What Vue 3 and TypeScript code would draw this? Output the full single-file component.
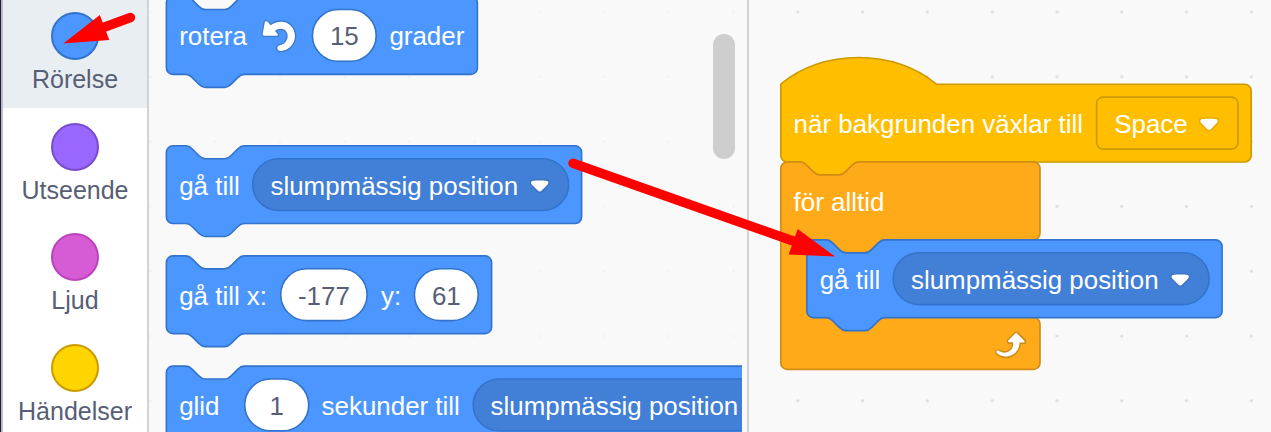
<script setup lang="ts">
interface Category { name: string; tone: string }
interface Label { text: string; x: number }
interface Oval { x: number; w: number; text: string }
interface Menu { x: number; w: number; textX: number; arrowX: number; text: string }
interface Block { x: number; y: number; w: number; labels: Label[]; inputs: Oval[]; menu?: Menu; turn?: boolean }

const U = 1.62

const categories: Category[] = [
  { name: 'Rörelse', tone: 'motion' },
  { name: 'Utseende', tone: 'looks' },
  { name: 'Ljud', tone: 'sound' },
  { name: 'Händelser', tone: 'events' },
]

const paletteBlocks: Block[] = [
  {
    x: 166.4, y: -3.4, w: 311, turn: true,
    labels: [{ text: 'rotera', x: 12.8 }, { text: 'grader', x: 223 }],
    inputs: [{ x: 146, w: 63.8, text: '15' }],
  },
  {
    x: 166.4, y: 145.8, w: 415.2,
    labels: [{ text: 'gå till', x: 12.8 }],
    inputs: [],
    menu: { x: 86.3, w: 315.9, textX: 104.1, arrowX: 363, text: 'slumpmässig position' },
  },
  {
    x: 166.4, y: 255.9, w: 325.2,
    labels: [{ text: 'gå till x:', x: 12.8 }, { text: 'y:', x: 214.6 }],
    inputs: [{ x: 114.3, w: 86.4, text: '-177' }, { x: 248, w: 63.8, text: '61' }],
  },
  {
    x: 166.4, y: 366.1, w: 640,
    labels: [{ text: 'glid', x: 12.8 }, { text: 'sekunder till', x: 155.2 }],
    inputs: [{ x: 78.3, w: 64, text: '1' }],
    menu: { x: 306.8, w: 315.9, textX: 324.2, arrowX: 583, text: 'slumpmässig position' },
  },
]

const scriptBlock: Block = {
  x: 806.9, y: 239.9, w: 415.2,
  labels: [{ text: 'gå till', x: 12.8 }],
  inputs: [],
  menu: { x: 86.3, w: 315.9, textX: 104.1, arrowX: 363, text: 'slumpmässig position' },
}

const notch = 'c2,0 3,1 4,2 l4,4 c1,1 2,2 4,2 h12 c2,0 3,-1 4,-2 l4,-4 c1,-1 2,-2 4,-2'
const notchBack = 'c-2,0 -3,1 -4,2 l-4,4 c-1,1 -2,2 -4,2 h-12 c-2,0 -3,-1 -4,-2 l-4,-4 c-1,-1 -2,-2 -4,-2'

function stackPath(px: number): string {
  const w = px / U
  return `M0,4 A4,4 0 0 1 4,0 H12 ${notch} H${w - 4} a4,4 0 0 1 4,4 v40 a4,4 0 0 1 -4,4 H48 ${notchBack} H4 a4,4 0 0 1 -4,-4 z`
}
const hatPath = `M0,0 c25,-22 71,-22 96,0 H${470.4 / U - 4} a4,4 0 0 1 4,4 v40 a4,4 0 0 1 -4,4 H48 ${notchBack} H4 a4,4 0 0 1 -4,-4 z`
const loopPath = `M0,4 A4,4 0 0 1 4,0 H12 ${notch} H156 a4,4 0 0 1 4,4 v40 a4,4 0 0 1 -4,4 H64 ${notchBack} H20 a4,4 0 0 0 -4,4 v40 a4,4 0 0 0 4,4 H156 a4,4 0 0 1 4,4 v24 a4,4 0 0 1 -4,4 H4 a4,4 0 0 1 -4,-4 z`

const arrowEdge = 'M12.71,2.44A2.41,2.41,0,0,1,12,4.16L8.08,8.08a2.45,2.45,0,0,1-3.45,0L.72,4.16A2.42,2.42,0,0,1,0,2.44,2.48,2.48,0,0,1,.71.71C1,.47,1.43,0,6.36,0S11.75,.46,12,.71A2.44,2.44,0,0,1,12.71,2.44Z'
const arrowFace = 'M6.36,7.79a1.43,1.43,0,0,1-1-.42L1.42,3.45a1.44,1.44,0,0,1,0-2c.56-.56,9.31-.56,9.87,0a1.44,1.44,0,0,1,0,2L7.37,7.37A1.43,1.43,0,0,1,6.36,7.79Z'

const groups: { id: string; blocks: Block[] }[] = [
  { id: 'palette', blocks: paletteBlocks },
  { id: 'script', blocks: [scriptBlock] },
]
</script>

<template>
  <div class="editor">
    <nav class="categories">
      <div v-for="(c, i) in categories" :key="c.name" class="category" :class="{ selected: i === 0 }">
        <span class="bubble" :class="c.tone"></span>
        <span class="name">{{ c.name }}</span>
      </div>
    </nav>

    <section v-for="g in groups" :key="g.id" :class="g.id">
      <svg v-if="g.id === 'palette'" class="canvas" width="593" height="432" viewBox="149 0 593 432">
        <defs>
          <pattern id="faint" x="118" y="-20.4" width="64.8" height="64.8" patternUnits="userSpaceOnUse">
            <circle cx="32.4" cy="32.4" r="1.5" fill="#f3f3f3" />
          </pattern>
        </defs>
        <rect x="149" width="593" height="432" fill="url(#faint)" />
        <g v-for="(b, n) in g.blocks" :key="n" :transform="`translate(${b.x} ${b.y})`">
          <path class="motion-shape" :transform="`scale(${U})`" :d="stackPath(b.w)" />
          <text v-for="l in b.labels" :key="l.text" :x="l.x" y="48.9">{{ l.text }}</text>
          <g v-for="o in b.inputs" :key="o.x">
            <rect class="input" :x="o.x" y="12.9" :width="o.w" height="51.8" rx="25.9" />
            <text class="value" :x="o.x + o.w / 2" y="48.9">{{ o.text }}</text>
          </g>
          <path
            v-if="b.turn" class="turn" transform="translate(-11.4 3.4) scale(.33333)"
            d="M335,64 Q330,63 329,68 L323,102 Q322,107 327,107 L366,107 Q371,106 368,102 L360,93 C367,86 383,83 392,92 C405,106 396,132 374,136 Q366,138 367,146 Q369,154 377,153 C400,152 420,133 420,108 C420,84 402,65 378,65 C367,65 356,69 347,76 L339,67 Q337,64 335,64 Z"
          />
          <g v-if="b.menu">
            <rect class="menu" :x="b.menu.x" y="12.9" :width="b.menu.w" height="51.8" rx="25.9" />
            <text :x="b.menu.textX" y="48.9">{{ b.menu.text }}</text>
            <g :transform="`translate(${b.menu.arrowX} 33) scale(${U})`">
              <path :d="arrowEdge" class="arrow-edge" />
              <path :d="arrowFace" class="arrow-face" />
            </g>
          </g>
        </g>
      </svg>
      <div v-if="g.id === 'palette'" class="thumb"></div>

      <svg v-else class="canvas" width="522" height="432" viewBox="749 0 522 432">
        <defs>
          <pattern id="grid" x="765.4" y="-20.4" width="64.8" height="64.8" patternUnits="userSpaceOnUse">
            <circle cx="32.4" cy="32.4" r="1.6" fill="#dddddd" />
          </pattern>
        </defs>
        <rect x="749" width="522" height="432" fill="url(#grid)" />
        <g transform="translate(780.8 84.2)">
          <path class="event-shape" :transform="`scale(${U})`" :d="hatPath" />
          <text x="12.8" y="48.9">när bakgrunden växlar till</text>
          <rect class="event-menu" x="315.8" y="12.9" width="141.4" height="52" rx="6.5" />
          <text x="333.4" y="48.9">Space</text>
          <g :transform="`translate(417.9 33) scale(${U})`">
            <path :d="arrowEdge" class="arrow-edge" />
            <path :d="arrowFace" class="arrow-face" />
          </g>
        </g>
        <g transform="translate(780.8 162)">
          <path class="control-shape" :transform="`scale(${U})`" :d="loopPath" />
          <text x="12.8" y="48.9">för alltid</text>
          <g :transform="`translate(207.6 162.6) scale(${U})`">
            <path fill="#cf8b17" d="M23.3,11c-.3,.6-.9,1-1.5,1h-1.6c-.1,1.3-.5,2.5-1.1,3.6c-.9,1.7-2.3,3.2-4.1,4.1c-1.7,.9-3.6,1.2-5.5,.9c-1.8-.3-3.5-1.1-4.9-2.3c-.7-.7-.7-1.9,0-2.6c.6-.6,1.6-.7,2.3-.2H7c.9,.6,1.9,.9,2.9,.9s1.9-.3,2.7-.9c1.1-.8,1.8-2.1,1.8-3.5h-1.5c-.9,0-1.7-.7-1.7-1.7c0-.4,.2-.9,.5-1.2l4.4-4.4c.7-.6,1.7-.6,2.4,0L23,9.2C23.5,9.7,23.6,10.4,23.3,11z" />
            <path fill="#ffffff" d="M21.8,11h-2.6c0,1.5-.3,2.9-1,4.2c-.8,1.6-2.1,2.8-3.7,3.6c-1.5,.8-3.3,1.1-4.9,.8c-1.6-.2-3.2-1-4.4-2.1c-.4-.3-.4-.9-.1-1.2c.3-.4,.9-.4,1.2-.1c1,.7,2.2,1.1,3.4,1.1s2.3-.3,3.3-1c.9-.6,1.6-1.5,2-2.6c.3-.9,.4-1.8,.2-2.8h-2.4c-.4,0-.7-.3-.7-.7c0-.2,.1-.3,.2-.4l4.4-4.4c.3-.3,.7-.3,.9,0L22,9.8c.3,.3,.4,.6,.3,.9S22,11,21.8,11z" />
          </g>
        </g>
        <g v-for="(b, n) in g.blocks" :key="n" :transform="`translate(${b.x} ${b.y})`">
          <path class="motion-shape" :transform="`scale(${U})`" :d="stackPath(b.w)" />
          <text v-for="l in b.labels" :key="l.text" :x="l.x" y="48.9">{{ l.text }}</text>
          <g v-if="b.menu">
            <rect class="menu" :x="b.menu.x" y="12.9" :width="b.menu.w" height="51.8" rx="25.9" />
            <text :x="b.menu.textX" y="48.9">{{ b.menu.text }}</text>
            <g :transform="`translate(${b.menu.arrowX} 33) scale(${U})`">
              <path :d="arrowEdge" class="arrow-edge" />
              <path :d="arrowFace" class="arrow-face" />
            </g>
          </g>
        </g>
      </svg>
    </section>

    <svg class="pointers" width="1271" height="432" viewBox="0 0 1271 432">
      <path class="shaft" d="M130.5,17.5 L102,28" />
      <path class="head" d="M63.3,43.5 L99.8,15 L109.3,40 Z" />
      <path class="shaft" d="M573,163.3 L796,242" />
      <path class="head" d="M835.2,256.6 L797.7,229 L788.7,254.4 Z" />
    </svg>
  </div>
</template>

<style>
body {
  margin: 0;
  overflow: hidden;
}
</style>

<style scoped>
.editor {
  position: relative;
  display: flex;
  width: 1271px;
  height: 432px;
  overflow: hidden;
  background: #f9f9f9;
  font-family: "Liberation Sans", Arial, sans-serif;
}
.categories {
  box-sizing: border-box;
  flex: none;
  width: 149px;
  height: 432px;
  overflow: hidden;
  background: #ffffff;
  border-right: 2px solid #d3d3d3;
  border-left: 1px solid #241c30;
  box-shadow: inset 2px 0 #bcbccd;
  padding-left: 2px;
}
.category {
  box-sizing: border-box;
  display: flex;
  flex-direction: column;
  align-items: center;
  height: 110.6px;
  padding-top: 14.6px;
}
.category:first-child {
  margin-top: -2.6px;
}
.category.selected {
  background: #e9eef2;
}
.bubble {
  box-sizing: border-box;
  width: 48px;
  height: 48px;
  border: 2px solid;
  border-radius: 50%;
}
.bubble.motion { background: #4c97ff; border-color: #3373cc; }
.bubble.looks { background: #9966ff; border-color: #774dcb; }
.bubble.sound { background: #d65cd6; border-color: #bd42bd; }
.bubble.events { background: #ffd500; border-color: #cc9900; }
.name {
  margin-top: 5px;
  font-size: 25px;
  line-height: 29px;
  white-space: nowrap;
  color: #575e75;
}
.palette {
  box-sizing: border-box;
  position: relative;
  flex: none;
  width: 600px;
  height: 432px;
  border-right: 2px solid #d3d3d3;
}
.script {
  flex: 1;
  height: 432px;
}
.canvas {
  display: block;
  overflow: hidden;
}
.thumb {
  position: absolute;
  top: 33.5px;
  left: 564px;
  width: 22px;
  height: 125px;
  border-radius: 11px;
  background: #cecece;
}
text {
  font-family: "Liberation Sans", Arial, sans-serif;
  font-size: 25.92px;
  fill: #ffffff;
}
text.value {
  fill: #575e75;
  text-anchor: middle;
}
.motion-shape { fill: #4c97ff; stroke: #3373cc; }
.event-shape { fill: #ffbf00; stroke: #cc9900; }
.control-shape { fill: #ffab19; stroke: #cf8b17; }
.input { fill: #ffffff; stroke: #3373cc; stroke-width: 1.62px; }
.menu { fill: #4280d7; stroke: #3373cc; stroke-width: 1.62px; }
.event-menu { fill: #ffbf00; stroke: #cc9900; stroke-width: 1.62px; }
.arrow-edge { fill: #231f20; opacity: 0.1; }
.arrow-face { fill: #ffffff; }
.turn {
  fill: #ffffff;
  stroke: #3d79cc;
  stroke-width: 8px;
  stroke-linejoin: round;
  paint-order: stroke;
}
.pointers {
  position: absolute;
  top: 0;
  left: 0;
}
.shaft {
  fill: none;
  stroke: #ff0000;
  stroke-width: 9.4px;
  stroke-linecap: round;
}
.head {
  fill: #ff0000;
}
</style>
